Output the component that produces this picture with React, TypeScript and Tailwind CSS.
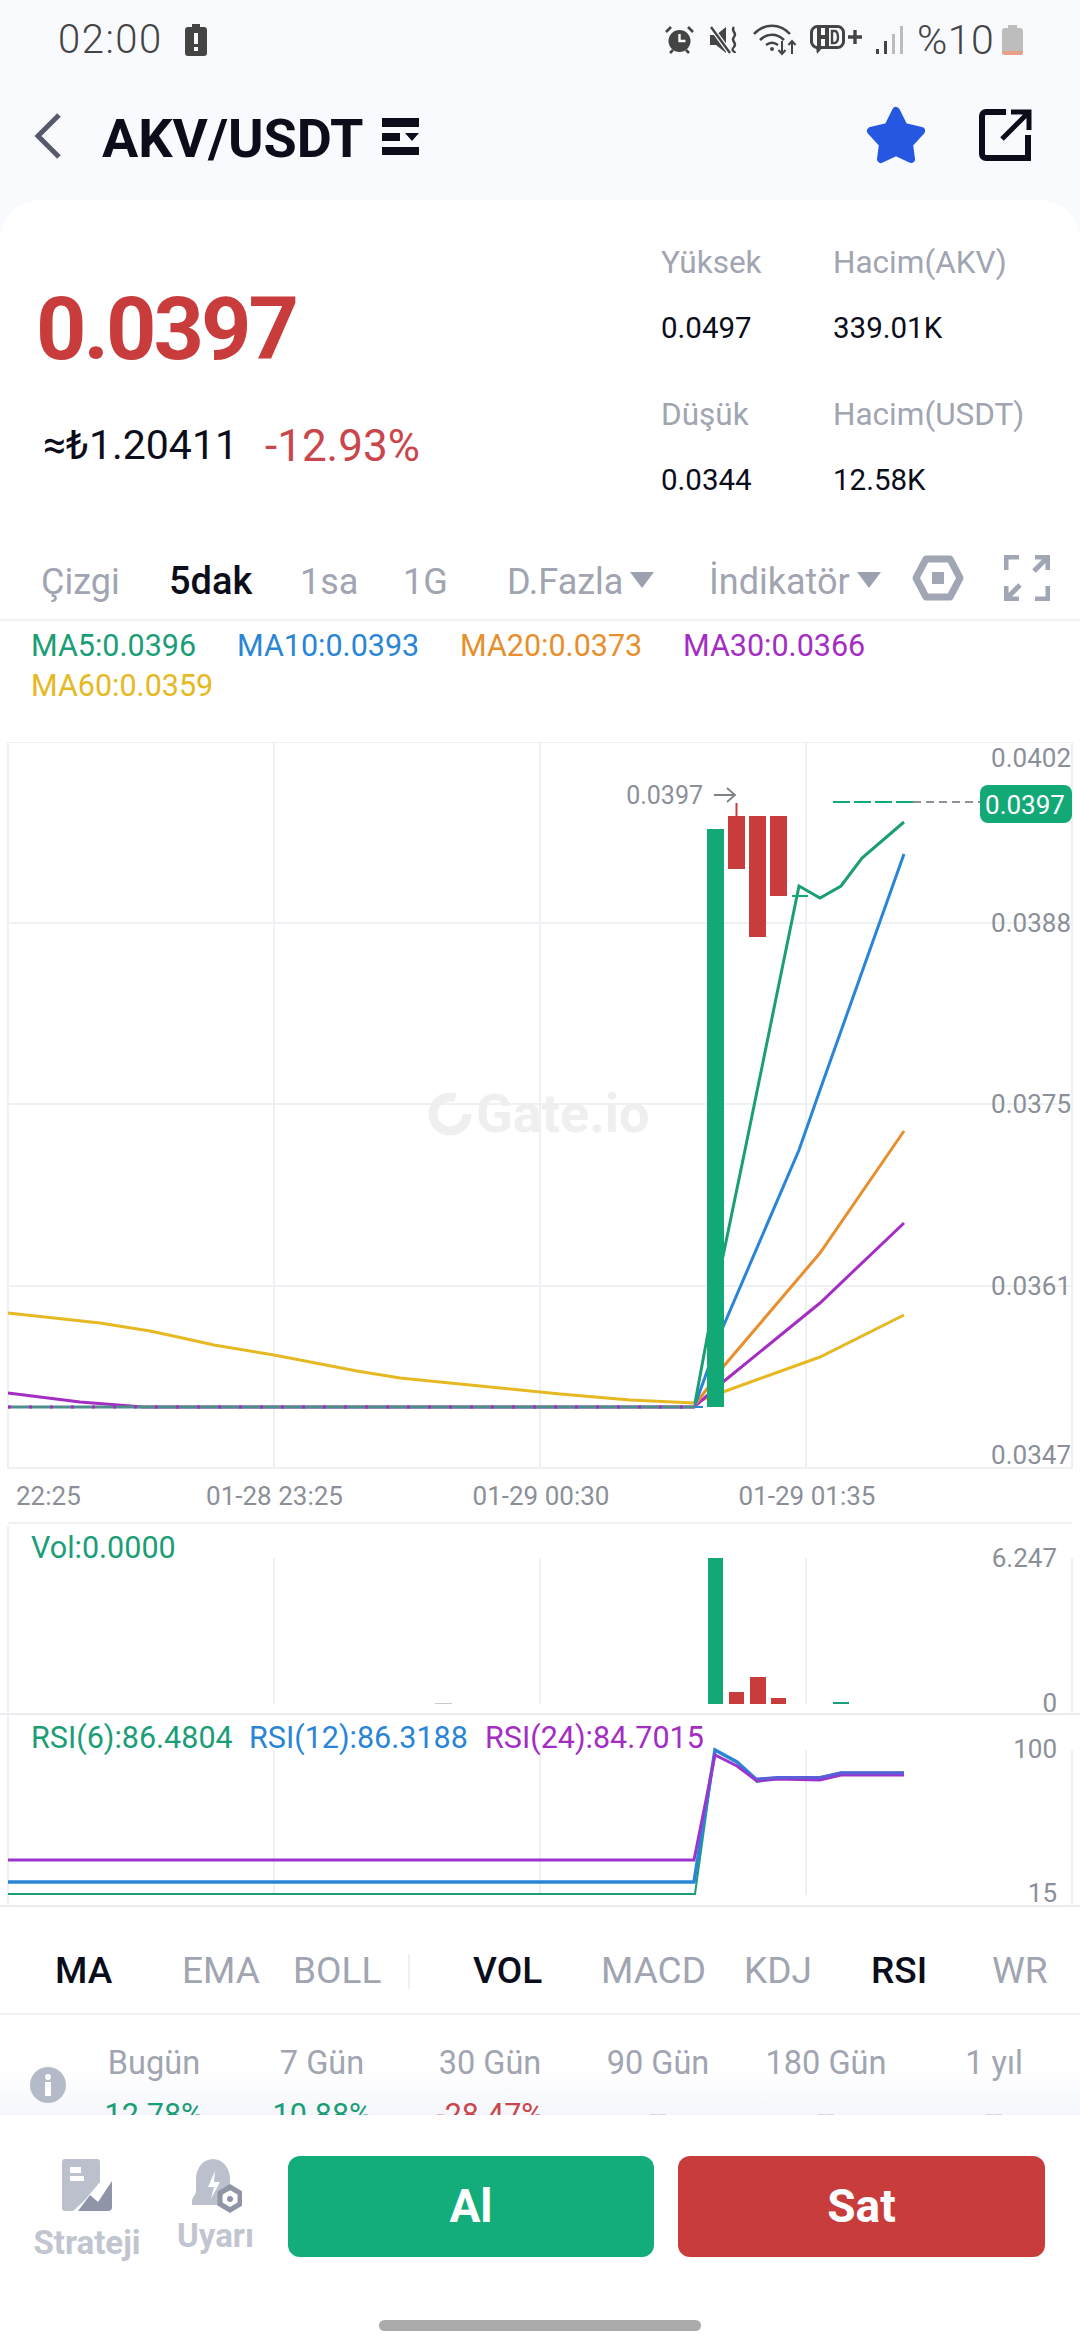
import React from "react";

const C = { ma5: "#1b9e77", ma10: "#2a85d6", ma20: "#e78f2d", ma30: "#a42dc4", ma60: "#e6b822", green: "#13a977", red: "#c93c3c", grid: "#eef0f3", axis: "#8b8f98" };

function StatusBar() {
  return (
    <div className="h-[80px] flex items-center pl-[58px] shrink-0 text-[#444]">
      <span className="text-[40px] tracking-[1.5px] w-[127px] font-light">02:00</span>
      <svg width="22" height="32" viewBox="0 0 22 32">
        <path d="M7 0h8v3h4a3 3 0 0 1 3 3v23a3 3 0 0 1-3 3H3a3 3 0 0 1-3-3V6a3 3 0 0 1 3-3h4z" fill="#444" />
        <rect x="9" y="9" width="4" height="11" fill="#f8fafd" />
        <rect x="9" y="23" width="4" height="4" fill="#f8fafd" />
      </svg>
      <div className="ml-[458px] flex items-center">
        <svg width="29" height="28" viewBox="0 0 29 28">
          <circle cx="14.5" cy="15" r="11" fill="#444" />
          <path d="M14.5 8v7h6" stroke="#f8fafd" strokeWidth="2.4" fill="none" />
          <path d="M1 6l5-5M28 6l-5-5M5 27l3-3M24 27l-3-3" stroke="#444" strokeWidth="2.6" />
        </svg>
        <svg className="ml-[16px]" width="29" height="28" viewBox="0 0 29 28">
          <path d="M0 9h6l10-8v26l-10-8H0z" fill="#444" />
          <path d="M1 1l19 26" stroke="#f8fafd" strokeWidth="5" />
          <path d="M1 1l19 26" stroke="#444" strokeWidth="2.4" />
          <path d="M24 1c-4 4 4 6 0 10s4 6 0 10 1 4 1 6" stroke="#444" strokeWidth="2.4" fill="none" />
        </svg>
        <svg className="ml-[14px]" width="45" height="32" viewBox="0 0 45 32">
          <path d="M1 10c10-11 26-11 36 0M7 16c7-7 17-7 24 0M13 21c4-3 8-3 12 0" stroke="#444" strokeWidth="2.6" fill="none" />
          <circle cx="19" cy="25" r="2" fill="#444" />
          <path d="M29 17v13m-3.500-4l3.500 4 3.500-4M39 30V17m-3.500 4l3.500-4 3.500 4" stroke="#444" strokeWidth="2" fill="none" />
        </svg>
        <svg className="ml-[12px]" width="53" height="30" viewBox="0 0 53 30">
          <rect x="1.500" y="1.500" width="32" height="21" rx="6" fill="none" stroke="#444" strokeWidth="3" />
          <path d="M7 2h4v8h4V2h4v20h-4v-8h-4v8H7z" fill="#444" />
          <path d="M22 6h3a3 6 0 0 1 0 12h-3z" fill="none" stroke="#444" strokeWidth="2.400" />
          <path d="M6 22h7l-6 7z" fill="#444" />
          <path d="M38 12h14M45 5v14" stroke="#444" strokeWidth="3.400" />
        </svg>
        <svg className="ml-[13px]" width="27" height="28" viewBox="0 0 27 28">
          <rect x="0" y="23" width="3" height="5" fill="#444" />
          <rect x="8" y="15" width="3" height="13" fill="#444" />
          <rect x="16" y="8" width="3" height="20" fill="#bdbdbd" />
          <rect x="24" y="0" width="3" height="28" fill="#bdbdbd" />
        </svg>
        <span className="ml-[14px] text-[41px] font-light leading-none w-[85px] tracking-[0.5px]">%10</span>
        <svg width="21" height="30" viewBox="0 0 21 30">
          <path d="M6 0h9v3h3a3 3 0 0 1 3 3v21a3 3 0 0 1-3 3H3a3 3 0 0 1-3-3V6a3 3 0 0 1 3-3h3z" fill="#bdbdbd" />
          <path d="M0 26h21v1a3 3 0 0 1-3 3H3a3 3 0 0 1-3-3z" fill="#e99f85" />
        </svg>
      </div>
    </div>
  );
}

function Header() {
  return (
    <div className="h-[120px] flex items-center shrink-0 relative">
      <svg className="ml-[34px] -mt-[8px]" width="28" height="46" viewBox="0 0 28 46">
        <path d="M25 2L4 23l21 21" stroke="#555b6b" strokeWidth="5" fill="none" />
      </svg>
      <span className="ml-[40px] -mt-[4px] w-[280px] text-[54px] font-bold text-[#0b0e1a]">AKV/USDT</span>
      <svg className="-mt-[8px]" width="37" height="37" viewBox="0 0 37 37">
        <rect width="37" height="9" fill="#0b0e1a" />
        <rect y="15" width="18" height="8" fill="#0b0e1a" />
        <path d="M23 15h14l-7 8z" fill="#0b0e1a" />
        <rect y="29" width="37" height="8" fill="#0b0e1a" />
      </svg>
      <svg className="ml-[447px] -mt-[10px]" width="60" height="58" viewBox="0 0 60 58">
        <path d="M30 5l8 16 17 4-12 13 2 15-15-7-15 7 2-15L5 25l17-4z" fill="#2557e0" stroke="#2557e0" strokeWidth="8" strokeLinejoin="round" />
      </svg>
      <svg className="ml-[52px] -mt-[10px]" width="54" height="54" viewBox="0 0 54 54">
        <path d="M28 4H8a4 4 0 0 0-4 4v38a4 4 0 0 0 4 4h42V27" fill="none" stroke="#0b0e1a" strokeWidth="6" />
        <path d="M24 31L50 5M33 4h18v18" fill="none" stroke="#0b0e1a" strokeWidth="5" />
      </svg>
    </div>
  );
}

function Stat({ label, value, w }: { label: string; value: string; w: string }) {
  return (
    <div className={`${w} flex flex-col`}>
      <span className="h-[40px] leading-[40px] text-[31.5px] text-[#a0a5b1]">{label}</span>
      <span className="mt-[25px] h-[40px] leading-[40px] text-[29.5px] text-[#0b0e1a]">{value}</span>
    </div>
  );
}

function Summary() {
  return (
    <div className="h-[340px] flex shrink-0">
      <div className="w-[661px] flex flex-col">
        <span className="mt-[84px] ml-[36px] h-[90px] leading-[90px] text-[88px] font-bold text-[#c93c3c] tracking-[-3px]">0.0397</span>
        <div className="mt-[47px] ml-[43px] h-[50px] flex items-center text-[41px]">
          <span className="w-[222px] text-[#0b0e1a]">≈₺1.20411</span>
          <span className="text-[44px] text-[#c9474c]">-12.93%</span>
        </div>
      </div>
      <div className="pt-[43px] flex flex-col gap-[47px]">
        <div className="flex">
          <Stat w="w-[172px]" label="Yüksek" value="0.0497" />
          <Stat w="w-[200px]" label="Hacim(AKV)" value="339.01K" />
        </div>
        <div className="flex">
          <Stat w="w-[172px]" label="Düşük" value="0.0344" />
          <Stat w="w-[200px]" label="Hacim(USDT)" value="12.58K" />
        </div>
      </div>
    </div>
  );
}

function Tri() {
  return (
    <svg className="ml-[7px] -mt-[4px]" width="24" height="16" viewBox="0 0 24 16">
      <path d="M0 0h24L12 16z" fill="#9ca1b0" />
    </svg>
  );
}

function Toolbar() {
  const g = "text-[#a0a5b1]";
  return (
    <div className="h-[81px] flex items-center pl-[41px] pt-[4px] border-b-[2px] border-[#f0f1f3] text-[36px] shrink-0">
      <span className={`w-[128px] ${g}`}>Çizgi</span>
      <span className="w-[131px] text-[38px] font-medium text-[#0b0e1a]">5dak</span>
      <span className={`w-[103px] ${g}`}>1sa</span>
      <span className={`w-[104px] ${g}`}>1G</span>
      <div className="w-[202px] flex items-center">
        <span className={g}>D.Fazla</span>
        <Tri />
      </div>
      <div className="w-[203px] flex items-center">
        <span className={g}>İndikatör</span>
        <Tri />
      </div>
      <svg className="w-[52px] h-[46px] -mt-[8px]" viewBox="0 0 52 46">
        <path d="M14 4h24l10 19-10 19H14L4 23z" fill="none" stroke="#a0a6b4" strokeWidth="7" strokeLinejoin="round" />
        <rect x="20" y="17" width="12" height="12" fill="#a0a6b4" />
      </svg>
      <svg className="ml-[40px] -mt-[8px]" width="46" height="46" viewBox="0 0 46 46">
        <path d="M2 15V2h13M2 31v13h13M44 31v13H31M31 2h13v13M44 2L30 16M2 44l14-14" fill="none" stroke="#a0a6b4" strokeWidth="5" />
      </svg>
    </div>
  );
}

function Legend() {
  const items: [string, string, string][] = [
    ["MA5:0.0396", "text-[#1b9e77]", "w-[206px]"],
    ["MA10:0.0393", "text-[#2a85d6]", "w-[223px]"],
    ["MA20:0.0373", "text-[#e78f2d]", "w-[223px]"],
    ["MA30:0.0366", "text-[#a42dc4]", "w-[223px]"],
    ["MA60:0.0359", "text-[#e6b822]", "w-[223px]"],
  ];
  return (
    <div className="h-[121px] pl-[31px] pt-[5px] flex flex-wrap content-start text-[30.5px] leading-[40px] shrink-0">
      {items.map(([t, c, w]) => (
        <span key={t} className={`${c} ${w}`}>
          {t}
        </span>
      ))}
    </div>
  );
}

function AxisText({ x, y, children, anchor = "end", fill = C.axis, size = 26 }: { x: number; y: number; children: React.ReactNode; anchor?: "end" | "start" | "middle"; fill?: string; size?: number }) {
  return (
    <text x={x} y={y} textAnchor={anchor} fontSize={size} fill={fill}>
      {children}
    </text>
  );
}

function pts(p: number[][]) {
  return p.map((a) => a.join(",")).join(" ");
}

function MainChart() {
  const yellow = [[8, 1313], [100, 1323], [150, 1331], [178, 1337], [214, 1345], [274, 1355], [357, 1371], [400, 1378], [500, 1388], [560, 1394], [630, 1400], [694, 1403], [723, 1392], [820, 1357], [904, 1315]];
  const purple = [[8, 1393], [80, 1402], [143, 1407], [694, 1407], [723, 1382], [820, 1303], [904, 1223]];
  const orange = [[695, 1405], [723, 1367], [820, 1253], [904, 1131]];
  const blue = [[695, 1405], [723, 1327], [799, 1150], [820, 1090], [904, 854]];
  const green = [[695, 1403], [716, 1290], [745, 1150], [799, 886], [820, 898], [841, 886], [862, 858], [904, 822]];
  return (
    <svg className="block shrink-0" width="1080" height="727" viewBox="0 742 1080 727">
      <rect x="8" y="742" width="1064" height="726" fill="none" stroke={C.grid} strokeWidth="2" />
      {[923, 1104, 1286].map((y) => (
        <line key={y} x1="8" x2="1072" y1={y} y2={y} stroke={C.grid} strokeWidth="2" />
      ))}
      {[274, 540, 806].map((x) => (
        <line key={x} x1={x} x2={x} y1="742" y2="1468" stroke={C.grid} strokeWidth="2" />
      ))}
      <g>
        <circle cx="450" cy="1114" r="17" fill="none" stroke="#efefef" strokeWidth="9" strokeDasharray="85 22" />
        <text x="476" y="1132" fontSize="54" fontWeight="700" fill="#efefef">Gate.io</text>
      </g>
      <AxisText x={1071} y={767}>0.0402</AxisText>
      <AxisText x={1071} y={932}>0.0388</AxisText>
      <AxisText x={1071} y={1113}>0.0375</AxisText>
      <AxisText x={1071} y={1295}>0.0361</AxisText>
      <AxisText x={1071} y={1464}>0.0347</AxisText>

      <polyline points={pts(yellow)} fill="none" stroke={C.ma60} strokeWidth="3" />
      <polyline points={pts(purple)} fill="none" stroke={C.ma30} strokeWidth="3" />
      <polyline points={pts(orange)} fill="none" stroke={C.ma20} strokeWidth="3" />
      <line x1="8" x2="695" y1="1407" y2="1407" stroke="#4d8d8c" strokeWidth="3" />
      <line x1="8" x2="695" y1="1407" y2="1407" stroke={C.ma30} strokeWidth="3" strokeDasharray="3 18" />
      <polyline points={pts(blue)} fill="none" stroke={C.ma10} strokeWidth="3" />
      <polyline points={pts(green)} fill="none" stroke={C.ma5} strokeWidth="3" />
      <line x1="695" x2="703" y1="1407" y2="1407" stroke={C.ma10} strokeWidth="2" />

      <rect x="707" y="829" width="17" height="578" fill={C.green} />
      <line x1="736.500" x2="736.500" y1="803" y2="816" stroke={C.red} strokeWidth="2" />
      <rect x="728" y="816" width="17" height="53" fill={C.red} />
      <rect x="749" y="816" width="17" height="121" fill={C.red} />
      <rect x="770" y="816" width="17" height="80" fill={C.red} />
      <line x1="792" x2="808" y1="896" y2="896" stroke={C.green} strokeWidth="2" />
      <line x1="913" x2="985" y1="802" y2="802" stroke="#6b6f78" strokeWidth="1.500" strokeDasharray="8 5" />
      <line x1="833" x2="913" y1="802" y2="802" stroke={C.green} strokeWidth="2" strokeDasharray="17 4" />

      <AxisText x={703} y={804} size={25}>0.0397</AxisText>
      <path d="M714 795h21m-8-7l8 7-8 7" fill="none" stroke="#7d818a" strokeWidth="1.800" />
      <rect x="980" y="785" width="92" height="38" rx="8" fill={C.green} />
      <AxisText x={1025} y={814} anchor="middle" fill="#ffffff">0.0397</AxisText>
    </svg>
  );
}

function TimeAxis() {
  return (
    <div className="h-[55px] border-b-[2px] border-[#eef0f3] ml-[8px] w-[1064px] shrink-0 text-[26px] leading-[40px] text-[#8b8f98] flex items-start pt-[7px]">
      <span className="w-[133px] pl-[8px]">22:25</span>
      <span className="w-[267px] text-center">01-28 23:25</span>
      <span className="w-[266px] text-center">01-29 00:30</span>
      <span className="w-[266px] text-center">01-29 01:35</span>
    </div>
  );
}

function VolPanel() {
  return (
    <div className="h-[191px] relative shrink-0 border-b-[2px] border-[#e9ebee]">
      <svg className="block overflow-visible" width="1080" height="189" viewBox="0 1524 1080 189">
        <line x1="1072" x2="1072" y1="1558" y2="1713" stroke={C.grid} strokeWidth="2" />
        <line x1="8" x2="8" y1="1526" y2="1713" stroke={C.grid} strokeWidth="2" />
        {[274, 540, 806].map((x) => (
          <line key={x} x1={x} x2={x} y1="1558" y2="1704" stroke={C.grid} strokeWidth="2" />
        ))}
        <rect x="708" y="1558" width="15" height="146" fill={C.green} />
        <rect x="729" y="1692" width="15" height="12" fill={C.red} />
        <rect x="750" y="1677" width="16" height="27" fill={C.red} />
        <rect x="771" y="1698" width="15" height="6" fill={C.red} />
        <rect x="833" y="1702" width="16" height="2" fill={C.ma5} />
        <rect x="435" y="1703" width="17" height="1" fill="#c8cacd" />
        <AxisText x={1057} y={1567}>6.247</AxisText>
        <AxisText x={1057} y={1712}>0</AxisText>
      </svg>
      <span className="absolute left-[31px] top-[4px] text-[30.5px] leading-[40px] text-[#1b9e77]">Vol:0.0000</span>
    </div>
  );
}

function RsiPanel() {
  const top = [[694, 1882], [715, 1750], [737, 1762], [757, 1780], [778, 1778], [820, 1778], [841, 1773], [904, 1773]];
  const purple = [[8, 1860], [694, 1860], [715, 1755], [737, 1766], [757, 1781], [778, 1779], [820, 1780], [841, 1775], [904, 1775]];
  return (
    <div className="h-[192px] relative shrink-0 border-b-[2px] border-[#e9ebee]">
      <svg className="block overflow-visible" width="1080" height="190" viewBox="0 1715 1080 190">
        <line x1="1072" x2="1072" y1="1750" y2="1905" stroke={C.grid} strokeWidth="2" />
        <line x1="8" x2="8" y1="1715" y2="1905" stroke={C.grid} strokeWidth="2" />
        {[274, 540, 806].map((x) => (
          <line key={x} x1={x} x2={x} y1="1750" y2="1895" stroke={C.grid} strokeWidth="2" />
        ))}
        <polyline points={pts([[8, 1894], [695, 1894], [715, 1750], [737, 1762], [757, 1782], [778, 1778], [820, 1778], [841, 1773], [904, 1773]])} fill="none" stroke={C.ma5} strokeWidth="2" />
        <polyline points={pts([[8, 1882], ...top])} fill="none" stroke={C.ma10} strokeWidth="3.500" />
        <polyline points={pts(purple)} fill="none" stroke="#9c35cf" strokeWidth="3" />
        <polyline points={pts([[757, 1779], [778, 1777.500], [820, 1777.500], [841, 1773], [904, 1773]])} fill="none" stroke="#5a5fd8" strokeWidth="3" />
        <AxisText x={1057} y={1758}>100</AxisText>
        <AxisText x={1057} y={1902}>15</AxisText>
      </svg>
      <div className="absolute left-[31px] top-[3px] flex text-[30.5px] leading-[40px]">
        <span className="w-[218px] text-[#1b9e77]">RSI(6):86.4804</span>
        <span className="w-[236px] text-[#2a85d6]">RSI(12):86.3188</span>
        <span className="text-[#a42dc4]">RSI(24):84.7015</span>
      </div>
    </div>
  );
}

function Tabs() {
  const items: [string, string, boolean][] = [
    ["EMA", "w-[111px]", false],
    ["BOLL", "w-[115px]", false],
  ];
  const rest: [string, string, boolean][] = [
    ["VOL", "w-[128px]", true],
    ["MACD", "w-[143px]", false],
    ["KDJ", "w-[127px]", false],
    ["RSI", "w-[121px]", true],
    ["WR", "w-[60px]", false],
  ];
  const cls = (on: boolean) => (on ? "font-medium text-[#0b0e1a]" : "text-[#a0a5b1]");
  return (
    <div className="h-[108px] flex items-center pl-[55px] pt-[22px] border-b-[2px] border-[#f0f1f3] text-[37px] shrink-0">
      <span className={`w-[127px] ${cls(true)}`}>MA</span>
      {items.map(([t, w, on]) => (
        <span key={t} className={`${w} ${cls(on)}`}>
          {t}
        </span>
      ))}
      <div className="w-[65px] h-[35px] border-l-[2px] border-[#eef0f3]" />
      {rest.map(([t, w, on]) => (
        <span key={t} className={`${w} ${cls(on)}`}>
          {t}
        </span>
      ))}
    </div>
  );
}

function Periods() {
  const cols: [string, string, string][] = [
    ["Bugün", "12.78%", "text-[#1b9e77]"],
    ["7 Gün", "10.88%", "text-[#1b9e77]"],
    ["30 Gün", "-28.47%", "text-[#c9474c]"],
    ["90 Gün", "--", "text-[#a0a5b1]"],
    ["180 Gün", "--", "text-[#a0a5b1]"],
    ["1 yıl", "--", "text-[#a0a5b1]"],
  ];
  return (
    <div className="h-[100px] relative overflow-hidden flex shrink-0">
      <div className="absolute left-0 right-0 bottom-0 h-[45px] bg-gradient-to-b from-white to-[#f4f6fb]" />
      <svg className="absolute left-[30px] top-[52px]" width="36" height="36" viewBox="0 0 36 36">
        <circle cx="18" cy="18" r="18" fill="#b5bac8" />
        <circle cx="18" cy="10" r="3" fill="#ffffff" />
        <rect x="15" y="15" width="6" height="14" fill="#ffffff" />
      </svg>
      <div className="relative pl-[70px] flex">
        {cols.map(([a, b, c]) => (
          <div key={a} className="w-[168px] flex flex-col items-center pt-[28px]">
            <span className="h-[40px] leading-[40px] text-[32.5px] text-[#a0a5b1]">{a}</span>
            <span className={`mt-[12px] h-[40px] leading-[40px] text-[30.5px] ${c}`}>{b}</span>
          </div>
        ))}
      </div>
    </div>
  );
}

function BottomBar() {
  return (
    <div className="flex-1 bg-white flex flex-col">
      <div className="flex pl-[34px] pt-[41px]">
        <div className="w-[106px] flex flex-col items-center">
          <svg className="mt-[3px]" width="50" height="52" viewBox="0 0 50 52">
            <path d="M3 0h32a3 3 0 0 1 3 3v20L22 42 11 52H3a3 3 0 0 1-3-3V3a3 3 0 0 1 3-3z" fill="#bcc0cc" />
            <rect x="8" y="17" width="14" height="5" fill="#fff" />
            <rect x="8" y="8" width="11" height="6" fill="#fff" />
            <path d="M16 52l12-16 8 7 14-21v26a4 4 0 0 1-4 4z" fill="#8f95a6" />
          </svg>
          <span className="mt-[12px] text-[33px] leading-[40px] font-bold text-[#c1c5d0]">Strateji</span>
        </div>
        <div className="ml-[36px] w-[79px] flex flex-col items-center">
          <svg className="mt-[3px]" width="52" height="54" viewBox="0 0 52 54">
            <path d="M6 26V20a17 20 0 0 1 34 0v12a12 12 0 0 0-10 14H2v-4c0-4 4-6 4-10z" fill="#bcc0cc" />
            <path d="M25 12l-7 16h6l-3 12 9-17h-6z" fill="#fff" />
            <path d="M40 28l10 6v11l-10 6-10-6V34z" fill="none" stroke="#8f95a6" strokeWidth="5" />
            <circle cx="40" cy="40" r="3" fill="#8f95a6" />
          </svg>
          <span className="mt-[3px] text-[33px] leading-[40px] font-bold text-[#c1c5d0]">Uyarı</span>
        </div>
        <div className="ml-[33px] w-[366px] h-[101px] rounded-[12px] bg-[#12ad7a] flex items-center justify-center text-[46px] font-bold text-white">Al</div>
        <div className="ml-[24px] w-[367px] h-[101px] rounded-[12px] bg-[#c93c3c] flex items-center justify-center text-[46px] font-bold text-white">Sat</div>
      </div>
      <div className="mt-[57px] mx-auto w-[322px] h-[11px] rounded-full bg-[#aaaaaa]" />
    </div>
  );
}

export default function App() {
  return (
    <div className="w-[1080px] h-[2340px] overflow-hidden flex flex-col bg-[#f8fafd] font-['Roboto',sans-serif]">
      <StatusBar />
      <Header />
      <div className="flex-1 flex flex-col bg-white rounded-t-[40px] overflow-hidden">
        <Summary />
        <Toolbar />
        <Legend />
        <MainChart />
        <TimeAxis />
        <VolPanel />
        <RsiPanel />
        <Tabs />
        <Periods />
        <BottomBar />
      </div>
    </div>
  );
}
